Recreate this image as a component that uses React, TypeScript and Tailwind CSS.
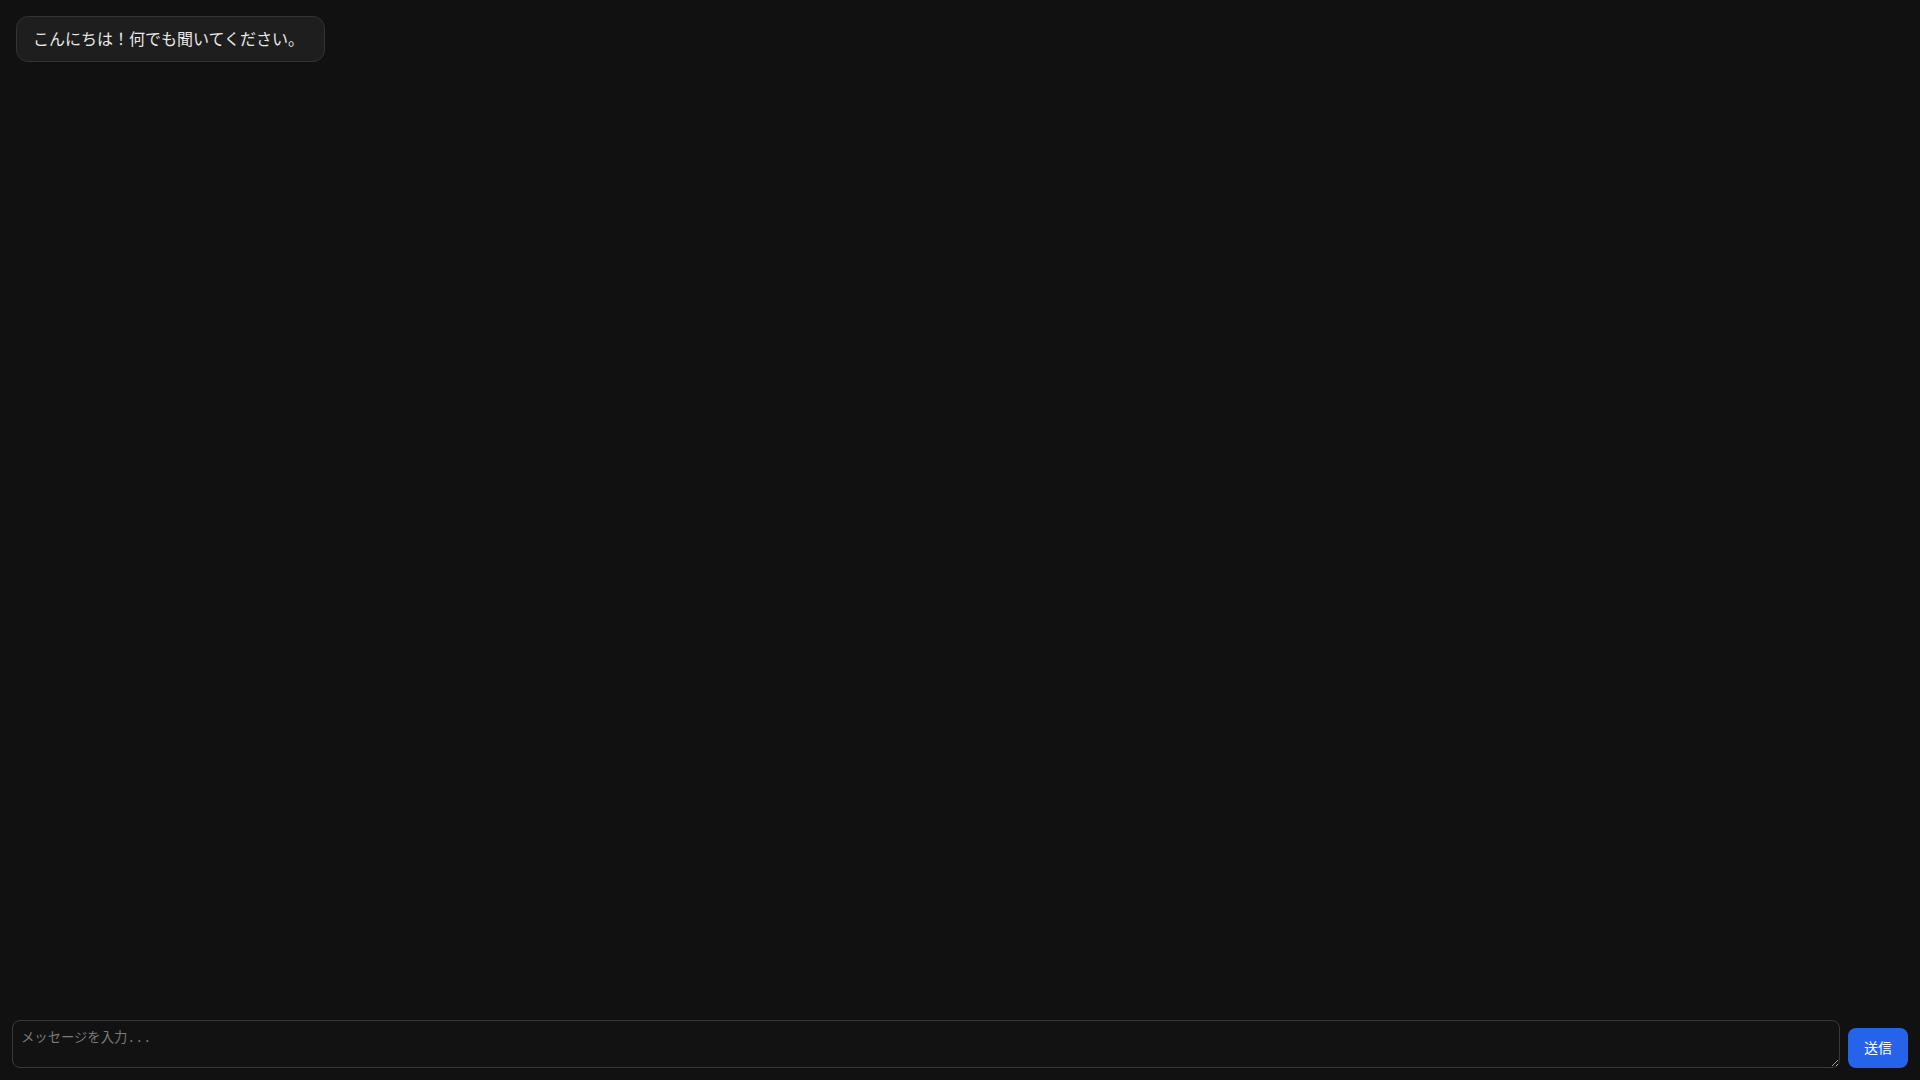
export default function App() {
  return (
    <div
      className="h-screen w-full flex flex-col bg-[#111111] text-[#e5e5e5]"
      style={{ fontFamily: '"Noto Sans CJK JP", "Noto Sans", sans-serif' }}
    >
      {/* Messages */}
      <div className="flex-1 overflow-y-auto p-4 flex flex-col gap-3">
        <div className="self-start max-w-[70%] rounded-xl border border-[#333333] bg-[#1e1e1e] pl-4 pr-5 pt-[9px] pb-[11px] text-base leading-6 text-[#e8e8e8]">
          こんにちは！何でも聞いてください。
        </div>
      </div>

      {/* Input */}
      <div className="flex items-end gap-2 p-3">
        <textarea
          placeholder="メッセージを入力..."
          className="flex-1 h-[48px] rounded-lg border border-[#3a3a3a] bg-[#121212] px-2 py-2 text-[13.33px] leading-5 text-[#e5e5e5] placeholder:text-[#7a7a7a] outline-none"
          style={{ fontFamily: '"Liberation Mono", "Noto Sans CJK JP", monospace' }}
        />
        <button className="h-[40px] rounded-lg bg-[#2563eb] px-4 pb-[2px] text-sm text-white">
          送信
        </button>
      </div>
    </div>
  );
}
